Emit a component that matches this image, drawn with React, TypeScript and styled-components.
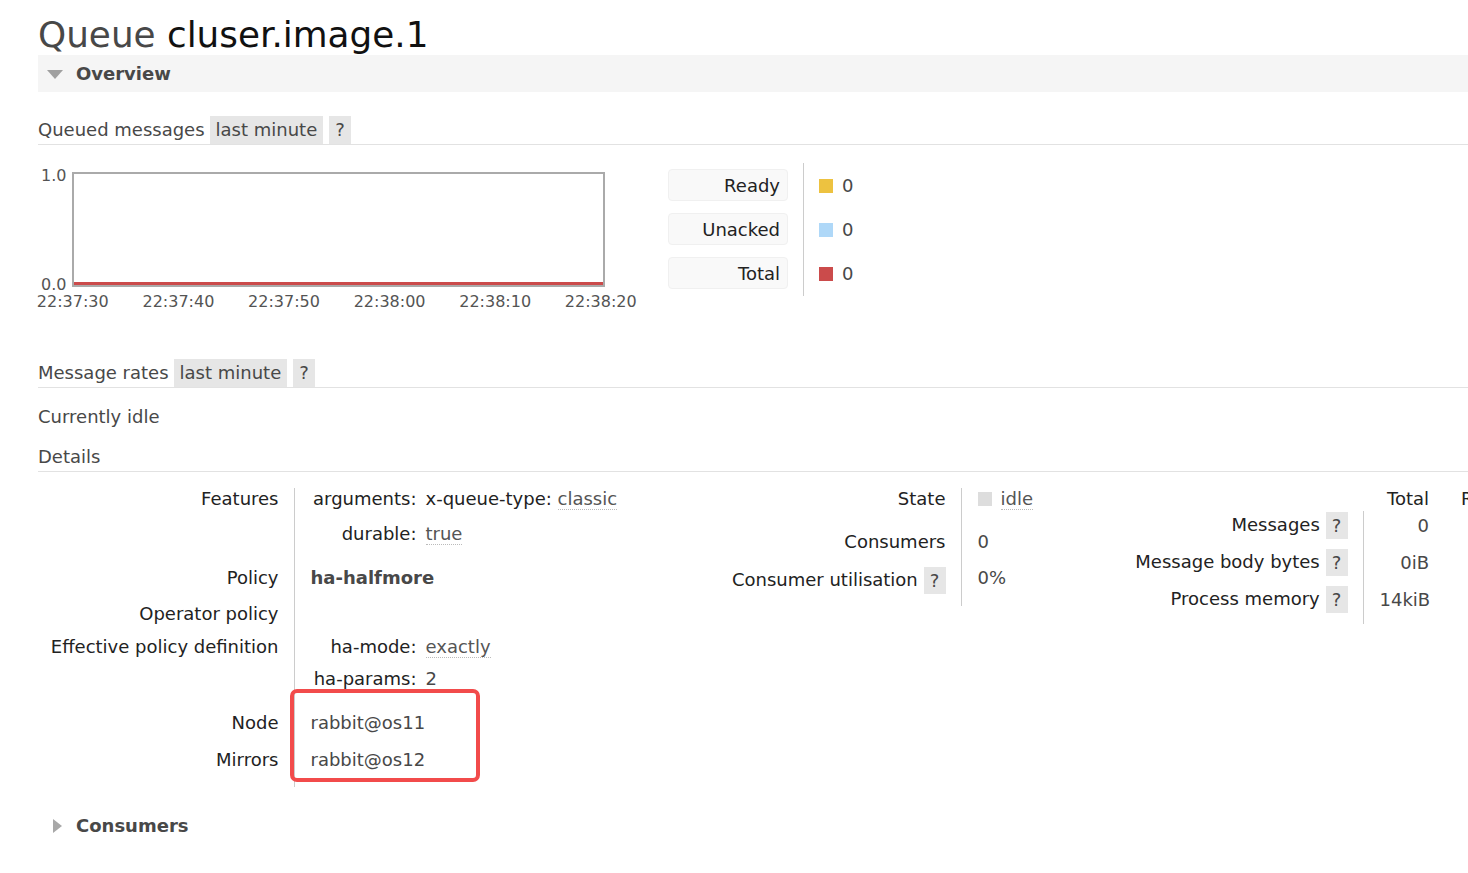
import React from "react";
import styled, { createGlobalStyle } from "styled-components";

const GlobalStyle = createGlobalStyle`
  html, body {
    margin: 0;
    padding: 0;
    background: #fff;
    overflow: hidden;
  }
  body {
    font-family: "DejaVu Sans", Verdana, sans-serif;
    font-size: 18px;
    line-height: 22px;
    color: #484848;
  }
`;

const legend = [
  { label: "Ready", color: "#edc240", value: "0" },
  { label: "Unacked", color: "#afd8f8", value: "0" },
  { label: "Total", color: "#cb4b4b", value: "0" },
];

const ticks = ["22:37:30", "22:37:40", "22:37:50", "22:38:00", "22:38:10", "22:38:20"];

const totals = [
  { label: "Messages", value: "0" },
  { label: "Message body bytes", value: "0iB" },
  { label: "Process memory", value: "14kiB" },
];

const App = () => {
  return (
    <>
      <GlobalStyle />
      <Page>
        <Title>
          Queue <b>cluser.image.1</b>
        </Title>

        <SectionBar $bg>
          <Arrow $open />
          Overview
        </SectionBar>

        <Header $mt={24}>
          <HeaderText>Queued messages</HeaderText>
          <HeaderBox>last minute</HeaderBox>
          <HeaderBox>?</HeaderBox>
        </Header>

        <ChartRow>
          <Chart>
            <YLabels>
              <span>1.0</span>
              <span>0.0</span>
            </YLabels>
            <svg width="533" height="115" viewBox="0 0 533 115">
              <rect x="1" y="1" width="531" height="113" fill="#fff" stroke="#aaa" strokeWidth="2" />
              <line x1="2" y1="111.5" x2="531" y2="111.5" stroke="#cb4b4b" strokeWidth="3" />
            </svg>
            <Ticks>
              {ticks.map((t) => (
                <span key={t}>{t}</span>
              ))}
            </Ticks>
          </Chart>

          <Legend>
            <LegendLabels>
              {legend.map((item) => (
                <LegendLabel key={item.label}>{item.label}</LegendLabel>
              ))}
            </LegendLabels>
            <LegendValues>
              {legend.map((item) => (
                <LegendValue key={item.label}>
                  <Swatch $color={item.color} />
                  {item.value}
                </LegendValue>
              ))}
            </LegendValues>
          </Legend>
        </ChartRow>

        <Header $mt={48}>
          <HeaderText>Message rates</HeaderText>
          <HeaderBox>last minute</HeaderBox>
          <HeaderBox>?</HeaderBox>
        </Header>

        <Idle>Currently idle</Idle>

        <Header $mt={15}>
          <HeaderText>Details</HeaderText>
        </Header>

        <Tables>
          <TableWrap>
            <Table $w={640}>
              <colgroup>
                <col style={{ width: 256 }} />
                <col />
              </colgroup>
              <tbody>
                <Tr $pt={0} $pb={15}>
                  <Th>Features</Th>
                  <Td>
                    <KV>
                      <Key>arguments:</Key>
                      <span>
                        <Key>x-queue-type:</Key> <Abbr>classic</Abbr>
                      </span>
                      <Key>durable:</Key>
                      <span>
                        <Abbr>true</Abbr>
                      </span>
                    </KV>
                  </Td>
                </Tr>
                <Tr $pt={7} $pb={7}>
                  <Th>Policy</Th>
                  <Td>
                    <Strong>ha-halfmore</Strong>
                  </Td>
                </Tr>
                <Tr $pt={7} $pb={6}>
                  <Th>Operator policy</Th>
                  <Td />
                </Tr>
                <Tr $pt={5} $pb={11}>
                  <Th>Effective policy definition</Th>
                  <Td>
                    <KV $gap={10}>
                      <Key>ha-mode:</Key>
                      <span>
                        <Abbr>exactly</Abbr>
                      </span>
                      <Key>ha-params:</Key>
                      <span>2</span>
                    </KV>
                  </Td>
                </Tr>
                <Tr $pt={11} $pb={7}>
                  <Th>Node</Th>
                  <Td>rabbit@os11</Td>
                </Tr>
                <Tr $pt={8} $pb={16}>
                  <Th>Mirrors</Th>
                  <Td>rabbit@os12</Td>
                </Tr>
              </tbody>
            </Table>
            <Highlight />
          </TableWrap>

          <Table $w={401}>
            <colgroup>
              <col style={{ width: 283 }} />
              <col />
            </colgroup>
            <tbody>
              <Tr $pt={0} $pb={13}>
                <Th>State</Th>
                <Td>
                  <Swatch $color="#ddd" />
                  <Abbr>idle</Abbr>
                </Td>
              </Tr>
              <Tr $pt={8} $pb={8}>
                <Th>Consumers</Th>
                <Td>0</Td>
              </Tr>
              <Tr $pt={6} $pb={12}>
                <Th>
                  Consumer utilisation <Help>?</Help>
                </Th>
                <Td>0%</Td>
              </Tr>
            </tbody>
          </Table>

          <Table $w={460}>
            <colgroup>
              <col style={{ width: 284 }} />
              <col style={{ width: 82 }} />
              <col />
            </colgroup>
            <tbody>
              <Tr $pt={0} $pb={1}>
                <HeadCell />
                <HeadCell $right>Total</HeadCell>
                <HeadCell>Ready</HeadCell>
              </Tr>
              {totals.map((row, i) => (
                <Tr key={row.label} $pt={i === 0 ? 1 : 5} $pb={i === 2 ? 11 : 5}>
                  <Th>
                    {row.label} <Help>?</Help>
                  </Th>
                  <NumCell>{row.value}</NumCell>
                  <Td />
                </Tr>
              ))}
            </tbody>
          </Table>
        </Tables>

        <SectionBar $mt={20}>
          <Arrow />
          Consumers
        </SectionBar>
        <SectionBar $mt={18}>
          <Arrow />
          Bindings
        </SectionBar>
      </Page>
    </>
  );
};

export default App;

const Page = styled.div`
  padding-left: 38px;
  width: 1430px;
`;

const Title = styled.h1`
  margin: 13px 0 0;
  height: 42px;
  font-size: 35.8px;
  line-height: 44px;
  font-weight: normal;
  color: #484848;

  b {
    font-weight: normal;
    color: #111;
  }
`;

const SectionBar = styled.div<{ $bg?: boolean; $mt?: number }>`
  display: flex;
  align-items: center;
  height: 37px;
  margin-top: ${(p) => p.$mt || 0}px;
  padding-left: 9px;
  background: ${(p) => (p.$bg ? "#f5f5f5" : "transparent")};
  font-weight: bold;
  color: #484848;
`;

const Arrow = styled.span<{ $open?: boolean }>`
  width: 0;
  height: 0;
  box-sizing: border-box;
  ${(p) =>
    p.$open
      ? `
    border-left: 8px solid transparent;
    border-right: 8px solid transparent;
    border-top: 9px solid #a0a0a0;
    margin: 1px 13px 0 0;
  `
      : `
    border-top: 7.5px solid transparent;
    border-bottom: 7.5px solid transparent;
    border-left: 9px solid #a8a8a8;
    margin: 0 14px 0 6px;
  `}
`;

const Header = styled.div<{ $mt: number }>`
  display: flex;
  align-items: stretch;
  height: 28px;
  margin-top: ${(p) => p.$mt}px;
  border-bottom: 1px solid #e2e2e2;
`;

const HeaderText = styled.span`
  display: flex;
  align-items: center;
  margin-right: 5px;
`;

const HeaderBox = styled.span`
  display: flex;
  align-items: center;
  padding: 0 6px;
  margin-right: 6px;
  background: #e6e6e6;
`;

const ChartRow = styled.div`
  display: flex;
  align-items: flex-start;
  margin-top: 18px;
`;

const Chart = styled.div`
  display: grid;
  grid-template-columns: 34px 533px;
  padding-top: 9px;
  font-size: 16px;
  line-height: 18px;
  color: #545454;

  svg {
    display: block;
  }
`;

const YLabels = styled.div`
  display: flex;
  flex-direction: column;
  justify-content: space-between;
  margin: -5px 0 -7px 3px;
`;

const Ticks = styled.div`
  grid-column: 1 / 3;
  display: grid;
  grid-template-columns: repeat(6, 105.6px);
  margin: 6px 0 0 -18px;
  text-align: center;
`;

const Legend = styled.div`
  display: flex;
  margin-left: 63px;
`;

const LegendLabels = styled.div`
  display: flex;
  flex-direction: column;
  gap: 12px;
  padding: 6px 15px 7px 0;
  border-right: 1px solid #ccc;
`;

const LegendLabel = styled.div`
  box-sizing: border-box;
  width: 120px;
  height: 32px;
  padding: 5px 7px 0 0;
  text-align: right;
  background: #f9f9f9;
  border: 1px solid #f0f0f0;
  border-radius: 4px;
  color: #222;
`;

const LegendValues = styled.div`
  display: flex;
  flex-direction: column;
  gap: 12px;
  padding: 7px 0 0 15px;
`;

const LegendValue = styled.div`
  display: flex;
  align-items: center;
  height: 32px;
  color: #484848;
`;

const Swatch = styled.span<{ $color: string }>`
  display: inline-block;
  width: 14px;
  height: 14px;
  margin-right: 9px;
  background: ${(p) => p.$color};
  vertical-align: -1px;
`;

const Idle = styled.div`
  margin-top: 18px;
`;

const Tables = styled.div`
  display: flex;
  align-items: flex-start;
  margin-top: 16px;
`;

const TableWrap = styled.div`
  position: relative;
  flex: none;
  width: 640px;
`;

const Table = styled.table<{ $w: number }>`
  flex: none;
  width: ${(p) => p.$w}px;
  table-layout: fixed;
  border-collapse: collapse;
`;

const Tr = styled.tr<{ $pt: number; $pb: number }>`
  & > th,
  & > td {
    padding-top: ${(p) => p.$pt}px;
    padding-bottom: ${(p) => p.$pb}px;
  }
`;

const Th = styled.th`
  padding-right: 15px;
  padding-left: 0;
  text-align: right;
  vertical-align: top;
  font-weight: normal;
  white-space: nowrap;
  color: #222;
  border-right: 1px solid #ccc;
`;

const Td = styled.td`
  padding-left: 16px;
  padding-right: 16px;
  vertical-align: top;
  white-space: nowrap;
  color: #484848;
`;

const HeadCell = styled.th<{ $right?: boolean }>`
  padding-left: 16px;
  padding-right: 16px;
  font-weight: normal;
  text-align: ${(p) => (p.$right ? "right" : "left")};
  color: #222;
  white-space: nowrap;
`;

const NumCell = styled(Td)`
  text-align: right;
  vertical-align: middle;
`;

const KV = styled.div<{ $gap?: number }>`
  display: grid;
  grid-template-columns: 104px auto;
  column-gap: 9px;
  row-gap: ${(p) => p.$gap ?? 13}px;
  margin-left: 2px;
`;

const Key = styled.span`
  text-align: right;
  color: #222;
`;

const Abbr = styled.span`
  border-bottom: 1px dotted #bbb;
  color: #555;
`;

const Strong = styled.b`
  color: #484848;
`;

const Help = styled.span`
  display: inline-block;
  width: 22px;
  height: 27px;
  line-height: 27px;
  text-align: center;
  background: #e6e6e6;
  color: #484848;
  vertical-align: middle;
`;

const Highlight = styled.div`
  position: absolute;
  left: 252px;
  top: 201px;
  width: 190px;
  height: 93px;
  box-sizing: border-box;
  border: 4px solid #f24b4b;
  border-radius: 7px;
  pointer-events: none;
`;
